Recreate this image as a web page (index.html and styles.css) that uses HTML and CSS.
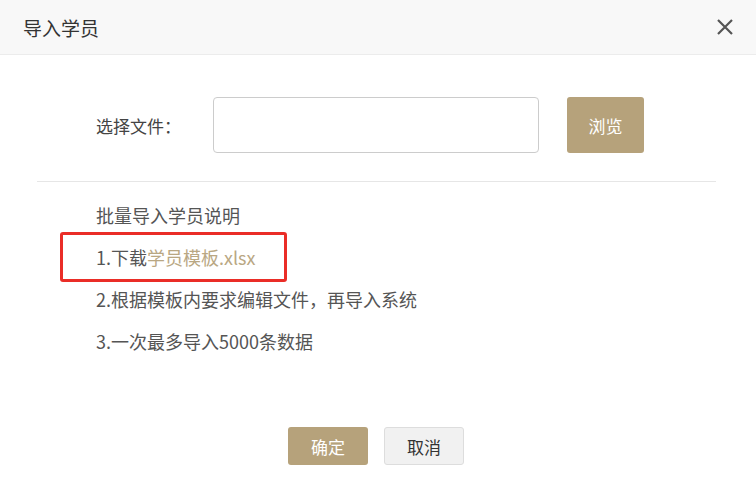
FILE: index.html
```html
<!DOCTYPE html>
<html lang="zh">
<head>
<meta charset="utf-8">
<title>导入学员</title>
<link rel="stylesheet" href="styles.css">
</head>
<body>
<div class="dialog">
  <div class="header">
    <span class="title">导入学员</span>
    <svg class="close" width="18" height="18" viewBox="0 0 18 18"><path d="M2 2L16 16M16 2L2 16" stroke="#555" stroke-width="2.2" fill="none"/></svg>
  </div>
  <div class="file-row">
    <span class="label">选择文件：</span>
    <div class="file-input"></div>
    <button class="btn btn-primary browse">浏览</button>
  </div>
  <div class="divider"></div>
  <div class="notes">
    <div class="line">批量导入学员说明</div>
    <div class="line highlight">1.下载<span class="link">学员模板.xlsx</span><span class="mark"></span></div>
    <div class="line">2.根据模板内要求编辑文件，再导入系统</div>
    <div class="line">3.一次最多导入5000条数据</div>
  </div>
  <div class="actions">
    <button class="btn btn-primary">确定</button>
    <button class="btn btn-default">取消</button>
  </div>
</div>
</body>
</html>
```
FILE: styles.css
```css
* { box-sizing: border-box; }
html, body { margin: 0; padding: 0; background: #fff; }
body {
  font-family: "Noto Sans CJK SC", "Liberation Sans", sans-serif;
  color: #333;
  width: 756px;
  height: 486px;
  overflow: hidden;
}
.header {
  height: 55px;
  background: #f8f8f8;
  border-bottom: 1px solid #ececec;
  display: flex;
  align-items: center;
  justify-content: space-between;
  padding: 0 22px 0 23px;
}
.title { font-size: 19px; color: #333; }
.close { display: block; }
.file-row {
  display: flex;
  align-items: center;
  margin-top: 42px;
  padding-left: 96px;
  height: 56px;
}
.label { font-size: 17px; color: #444; width: 117px; }
.file-input {
  width: 326px;
  height: 56px;
  border: 1px solid #ccc;
  border-radius: 4px;
  background: #fff;
}
.btn {
  font-family: inherit;
  border-radius: 3px;
  cursor: pointer;
  font-size: 17px;
}
.btn-primary { background: #b6a27b; color: #fff; border: none; }
.btn-default { background: #f1f1f1; color: #333; border: 1px solid #ddd; }
.browse { width: 77px; height: 56px; margin-left: 28px; }
.divider {
  margin: 28px 40px 0 37px;
  border-top: 1px solid #e6e6e6;
}
.notes { padding: 13px 0 0 96px; }
.line {
  height: 42px;
  line-height: 41px;
  font-size: 18px;
  color: #555;
}
.highlight { position: relative; }
.link { color: #b9a783; }
.mark {
  position: absolute;
  left: -36px;
  top: -5px;
  width: 227px;
  height: 50px;
  border: 3px solid #ea2d27;
  border-radius: 3px;
}
.actions {
  display: flex;
  justify-content: center;
  gap: 16px;
  margin-top: 64px;
  padding-right: 4px;
}
.actions .btn { width: 80px; height: 38px; }
```
